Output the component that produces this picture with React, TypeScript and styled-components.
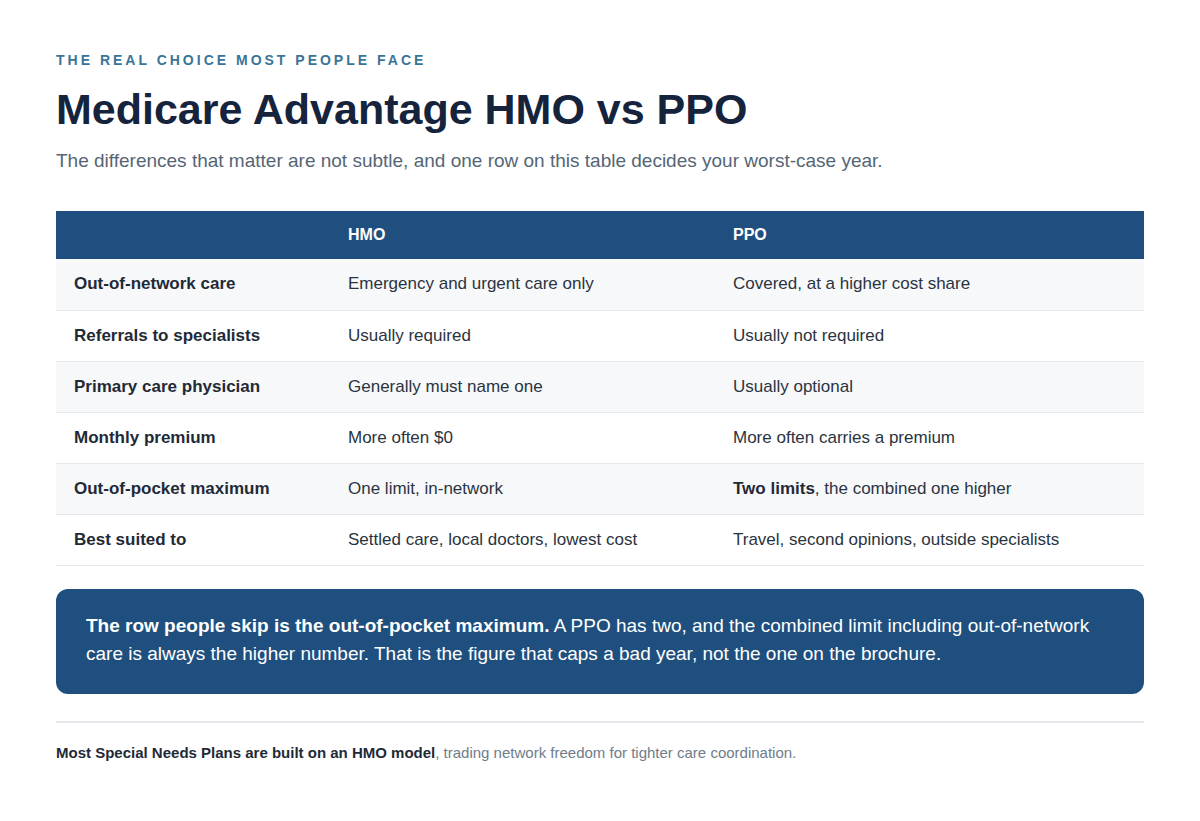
import React from 'react'
import styled, { createGlobalStyle } from 'styled-components'

const GlobalStyle = createGlobalStyle`
  html, body {
    margin: 0;
    padding: 0;
    background: #ffffff;
    font-family: "Liberation Sans", Arial, sans-serif;
  }
  *, *::before, *::after {
    box-sizing: border-box;
  }
`

const Page = styled.div`
  padding: 51px 56px 40px;
`

const Eyebrow = styled.div`
  font-size: 14px;
  font-weight: 700;
  letter-spacing: 3px;
  color: #3b7497;
  line-height: 18px;
  text-transform: uppercase;
`

const Title = styled.h1`
  margin: 14px 0 0;
  font-size: 43px;
  line-height: 52px;
  font-weight: 700;
  color: #15243c;
`

const Subtitle = styled.p`
  margin: 13px 0 0;
  font-size: 19px;
  line-height: 26px;
  color: #566575;
`

const Table = styled.table`
  margin-top: 37px;
  width: 100%;
  border-collapse: collapse;
  table-layout: fixed;
  font-size: 17px;
`

const HeadCell = styled.th<{ $width: number }>`
  width: ${(p) => p.$width}px;
  background: #1f4f7e;
  color: #ffffff;
  text-align: left;
  font-weight: 700;
  font-size: 16px;
  height: 48px;
  padding: 0 18px;
`

const Row = styled.tr<{ $shaded: boolean }>`
  background: ${(p) => (p.$shaded ? '#f7f8fa' : '#ffffff')};
  border-bottom: 1px solid #e3e8ee;
`

const LabelCell = styled.td`
  height: 51px;
  padding: 0 18px;
  font-weight: 700;
  color: #1f2a37;
`

const Cell = styled.td`
  height: 51px;
  padding: 0 18px;
  color: #2a3441;

  strong {
    font-weight: 700;
    color: #1f2a37;
  }
`

const Callout = styled.div`
  margin-top: 23px;
  background: #1f4f7e;
  border-radius: 12px;
  padding: 23px 30px 26px;
  color: #ffffff;
  font-size: 19px;
  line-height: 28px;

  strong {
    font-weight: 700;
  }
`

const Divider = styled.hr`
  margin: 27px 0 0;
  border: none;
  border-top: 2px solid #e5e9ee;
`

const Footnote = styled.p`
  margin: 20px 0 0;
  font-size: 15px;
  line-height: 20px;
  color: #6f7c8a;

  strong {
    color: #1f2a37;
    font-weight: 700;
  }
`

const rows: { label: string; hmo: React.ReactNode; ppo: React.ReactNode }[] = [
  { label: 'Out-of-network care', hmo: 'Emergency and urgent care only', ppo: 'Covered, at a higher cost share' },
  { label: 'Referrals to specialists', hmo: 'Usually required', ppo: 'Usually not required' },
  { label: 'Primary care physician', hmo: 'Generally must name one', ppo: 'Usually optional' },
  { label: 'Monthly premium', hmo: 'More often $0', ppo: 'More often carries a premium' },
  {
    label: 'Out-of-pocket maximum',
    hmo: 'One limit, in-network',
    ppo: (
      <>
        <strong>Two limits</strong>, the combined one higher
      </>
    ),
  },
  {
    label: 'Best suited to',
    hmo: 'Settled care, local doctors, lowest cost',
    ppo: 'Travel, second opinions, outside specialists',
  },
]

export default function App() {
  return (
    <>
      <GlobalStyle />
      <Page>
        <Eyebrow>The real choice most people face</Eyebrow>
        <Title>Medicare Advantage HMO vs PPO</Title>
        <Subtitle>
          The differences that matter are not subtle, and one row on this table decides your worst-case year.
        </Subtitle>

        <Table>
          <thead>
            <tr>
              <HeadCell $width={274}></HeadCell>
              <HeadCell $width={385}>HMO</HeadCell>
              <HeadCell $width={429}>PPO</HeadCell>
            </tr>
          </thead>
          <tbody>
            {rows.map((r, i) => (
              <Row key={r.label} $shaded={i % 2 === 0}>
                <LabelCell>{r.label}</LabelCell>
                <Cell>{r.hmo}</Cell>
                <Cell>{r.ppo}</Cell>
              </Row>
            ))}
          </tbody>
        </Table>

        <Callout>
          <strong>The row people skip is the out-of-pocket maximum.</strong> A PPO has two, and the combined limit
          including out-of-network care is always the higher number. That is the figure that caps a bad year, not the
          one on the brochure.
        </Callout>

        <Divider />

        <Footnote>
          <strong>Most Special Needs Plans are built on an HMO model</strong>, trading network freedom for tighter care
          coordination.
        </Footnote>
      </Page>
    </>
  )
}
